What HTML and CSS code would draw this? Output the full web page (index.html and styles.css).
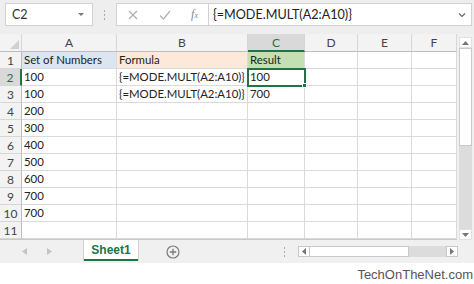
FILE: index.html
```html
<!DOCTYPE html>
<html>
<head>
<meta charset="utf-8">
<link rel="stylesheet" href="styles.css">
</head>
<body>
<div class="app">
  <div class="topbar">
    <div class="namebox"><span>C2</span><span class="nb-arrow"></span></div>
    <div class="vdots"><i></i><i></i><i></i></div>
    <div class="fbar">
      <div class="fbtns">
        <svg width="12" height="12" viewBox="0 0 12 12"><path d="M2 2 L10 10 M10 2 L2 10" stroke="#b0b0b0" stroke-width="1.2" fill="none"/></svg>
        <svg width="14" height="12" viewBox="0 0 14 12"><path d="M2 6.5 L5.5 10 L12 2" stroke="#b0b0b0" stroke-width="1.2" fill="none"/></svg>
        <span class="fx"><i>f</i><small>x</small></span>
      </div>
      <div class="ftext">{=MODE.MULT(A2:A10)}</div>
      <svg class="fdrop" width="8" height="6" viewBox="0 0 8 6"><path d="M1 1.5 L4 4.5 L7 1.5" stroke="#666" stroke-width="1.1" fill="none"/></svg>
    </div>
  </div>
  <div class="sheet">
    <div class="grid">
      <div class="ch corner"><svg width="9" height="9" viewBox="0 0 9 9"><path d="M9 0 L9 9 L0 9 Z" fill="#d0d0d0"/></svg></div>
      <div class="ch">A</div><div class="ch">B</div><div class="ch sel">C</div><div class="ch">D</div><div class="ch">E</div><div class="ch">F</div>

      <div class="rh">1</div><div class="c blue">Set of Numbers</div><div class="c peach">Formula</div><div class="c green">Result</div><div class="c"></div><div class="c"></div><div class="c"></div>
      <div class="rh sel">2</div><div class="c">100</div><div class="c">{=MODE.MULT(A2:A10)}</div><div class="c active">100<span class="handle"></span></div><div class="c"></div><div class="c"></div><div class="c"></div>
      <div class="rh">3</div><div class="c">100</div><div class="c">{=MODE.MULT(A2:A10)}</div><div class="c">700</div><div class="c"></div><div class="c"></div><div class="c"></div>
      <div class="rh">4</div><div class="c">200</div><div class="c"></div><div class="c"></div><div class="c"></div><div class="c"></div><div class="c"></div>
      <div class="rh">5</div><div class="c">300</div><div class="c"></div><div class="c"></div><div class="c"></div><div class="c"></div><div class="c"></div>
      <div class="rh">6</div><div class="c">400</div><div class="c"></div><div class="c"></div><div class="c"></div><div class="c"></div><div class="c"></div>
      <div class="rh">7</div><div class="c">500</div><div class="c"></div><div class="c"></div><div class="c"></div><div class="c"></div><div class="c"></div>
      <div class="rh">8</div><div class="c">600</div><div class="c"></div><div class="c"></div><div class="c"></div><div class="c"></div><div class="c"></div>
      <div class="rh">9</div><div class="c">700</div><div class="c"></div><div class="c"></div><div class="c"></div><div class="c"></div><div class="c"></div>
      <div class="rh">10</div><div class="c">700</div><div class="c"></div><div class="c"></div><div class="c"></div><div class="c"></div><div class="c"></div>
      <div class="rh">11</div><div class="c"></div><div class="c"></div><div class="c"></div><div class="c"></div><div class="c"></div><div class="c"></div>
    </div>
    <div class="vscroll">
      <div class="sbtn"><svg width="7" height="4" viewBox="0 0 7 4"><path d="M0 4 L3.5 0 L7 4 Z" fill="#777"/></svg></div>
      <div class="vthumb"></div>
      <div class="vtrack"></div>
      <div class="sbtn"><svg width="7" height="4" viewBox="0 0 7 4"><path d="M0 0 L3.5 4 L7 0 Z" fill="#777"/></svg></div>
    </div>
  </div>
  <div class="tabbar">
    <div class="navs">
      <svg width="5" height="7" viewBox="0 0 5 7"><path d="M5 0 L0 3.5 L5 7 Z" fill="#c4c4c4"/></svg>
      <svg width="5" height="7" viewBox="0 0 5 7"><path d="M0 0 L5 3.5 L0 7 Z" fill="#c4c4c4"/></svg>
    </div>
    <div class="tab">Sheet1</div>
    <svg class="plus" width="14" height="14" viewBox="0 0 14 14"><circle cx="7" cy="7" r="6" stroke="#7a7a7a" stroke-width="1.2" fill="none"/><path d="M7 3.8 V10.2 M3.8 7 H10.2" stroke="#7a7a7a" stroke-width="1.3"/></svg>
    <div class="hdots"><i></i><i></i><i></i></div>
    <div class="hscroll">
      <div class="hbtn"><svg width="4" height="7" viewBox="0 0 4 7"><path d="M4 0 L0 3.5 L4 7 Z" fill="#777"/></svg></div>
      <div class="hthumb"></div>
      <div class="htrack"></div>
      <div class="hbtn"><svg width="4" height="7" viewBox="0 0 4 7"><path d="M0 0 L4 3.5 L0 7 Z" fill="#777"/></svg></div>
    </div>
  </div>
  <div class="footer">TechOnTheNet.com</div>
</div>
</body>
</html>
```
FILE: styles.css
```css
html, body { margin: 0; padding: 0; background: #fff; }
body { width: 474px; height: 284px; overflow: hidden; font-family: "Lato", "Liberation Sans", sans-serif; }
.app { width: 474px; }

.topbar { height: 34px; background: #eeeeee; display: flex; align-items: flex-start; padding-top: 3px; box-sizing: border-box; }
.namebox { margin-left: 5px; width: 88px; height: 23px; box-sizing: border-box; background: #fff; border: 1px solid #d2d2d2; display: flex; align-items: center; justify-content: space-between; padding: 0 8px 0 6px; font-size: 12.5px; color: #333; }
.nb-arrow { width: 0; height: 0; border-left: 3px solid transparent; border-right: 3px solid transparent; border-top: 3px solid #777; }
.vdots { width: 23px; height: 23px; display: flex; flex-direction: column; align-items: center; justify-content: center; gap: 2px; }
.vdots i { display: block; width: 1px; height: 2px; background: #aaa; }
.fbar { margin-left: 0; width: 356px; height: 23px; box-sizing: border-box; background: #fff; border: 1px solid #d2d2d2; display: flex; align-items: center; }
.fbtns { width: 92px; display: flex; align-items: center; justify-content: space-between; padding: 0 10px 0 10px; box-sizing: border-box; border-right: 1px solid #d2d2d2; height: 100%; }
.fx { font-family: "Liberation Serif", serif; color: #8a8a8a; font-size: 12px; }
.fx small { font-size: 8px; font-style: italic; }
.ftext { flex: 1; padding-left: 4px; font-size: 12.6px; color: #222; }
.fdrop { margin-right: 5px; }

.sheet { display: flex; }
.grid { display: grid; grid-template-columns: 22px 95px 131px 57px 53px 54px 45px; grid-template-rows: 18px repeat(11, 17px); width: 457px; border-bottom: 1px solid #c8c8c8; background: #fff; }
.ch { background: #f3f3f3; border-right: 1px solid #d6d6d6; border-bottom: 1px solid #bdbdbd; box-sizing: border-box; display: flex; align-items: center; justify-content: center; font-size: 12px; color: #444; }
.ch.corner { justify-content: flex-end; align-items: flex-end; padding: 0 2px 2px 0; }
.ch.sel { background: #d9d9d9; border-bottom: 2px solid #217346; color: #217346; }
.rh { background: #f3f3f3; border-right: 1px solid #bdbdbd; border-bottom: 1px solid #d6d6d6; box-sizing: border-box; display: flex; align-items: center; justify-content: center; font-size: 12px; color: #444; }
.rh.sel { background: #d9d9d9; border-right: 2px solid #217346; color: #217346; }
.c { border-right: 1px solid #dadada; border-bottom: 1px solid #dadada; box-sizing: border-box; font-size: 11.4px; color: #222; padding-left: 2px; line-height: 16px; white-space: nowrap; overflow: hidden; position: relative; }
.c.blue { background: #dce6f2; }
.c.peach { background: #fde9d9; }
.c.green { background: #c4e0b2; }
.c.active { outline: 2px solid #217346; outline-offset: -1px; overflow: visible; z-index: 1; }
.handle { position: absolute; right: -3px; bottom: -3px; width: 5px; height: 5px; background: #217346; border: 1px solid #fff; box-sizing: border-box; }

.vscroll { width: 17px; background: #f0f0f0; display: flex; flex-direction: column; align-items: center; padding-top: 3px; box-sizing: border-box; }
.sbtn { width: 13px; height: 11px; display: flex; align-items: center; justify-content: center; background: #fff; border: 1px solid #e0e0e0; box-sizing: border-box; }
.vthumb { width: 13px; height: 98px; background: #fff; border: 1px solid #c9c9c9; box-sizing: border-box; }
.vtrack { width: 13px; flex: 1; background: #dcdcdc; }

.tabbar { height: 23px; background: #f0f0f0; display: flex; align-items: center; }
.navs { width: 84px; display: flex; gap: 20px; padding-left: 22px; box-sizing: border-box; }
.tab { width: 54px; height: 21px; align-self: flex-start; background: #fff; border-bottom: 2px solid #217346; box-sizing: border-box; display: flex; align-items: center; justify-content: center; font-family: "Liberation Sans", sans-serif; font-weight: bold; font-size: 12px; color: #217346; box-shadow: 1px 0 0 #d0d0d0, -1px 0 0 #d0d0d0; }
.plus { margin-left: 28px; }
.hdots { margin-left: 104px; display: flex; flex-direction: column; gap: 2px; }
.hdots i { display: block; width: 1px; height: 2px; background: #aaa; }
.hscroll { margin-left: 13px; display: flex; align-items: center; height: 11px; }
.hbtn { width: 12px; height: 11px; background: #fff; border: 1px solid #c9c9c9; box-sizing: border-box; display: flex; align-items: center; justify-content: center; }
.hthumb { width: 99px; height: 11px; background: #fff; border: 1px solid #c9c9c9; border-left: none; box-sizing: border-box; }
.htrack { width: 37px; height: 11px; background: #dcdcdc; }

.footer { text-align: right; padding-right: 1px; padding-top: 4px; font-family: "Liberation Sans", sans-serif; font-size: 13px; color: #555; }
```
